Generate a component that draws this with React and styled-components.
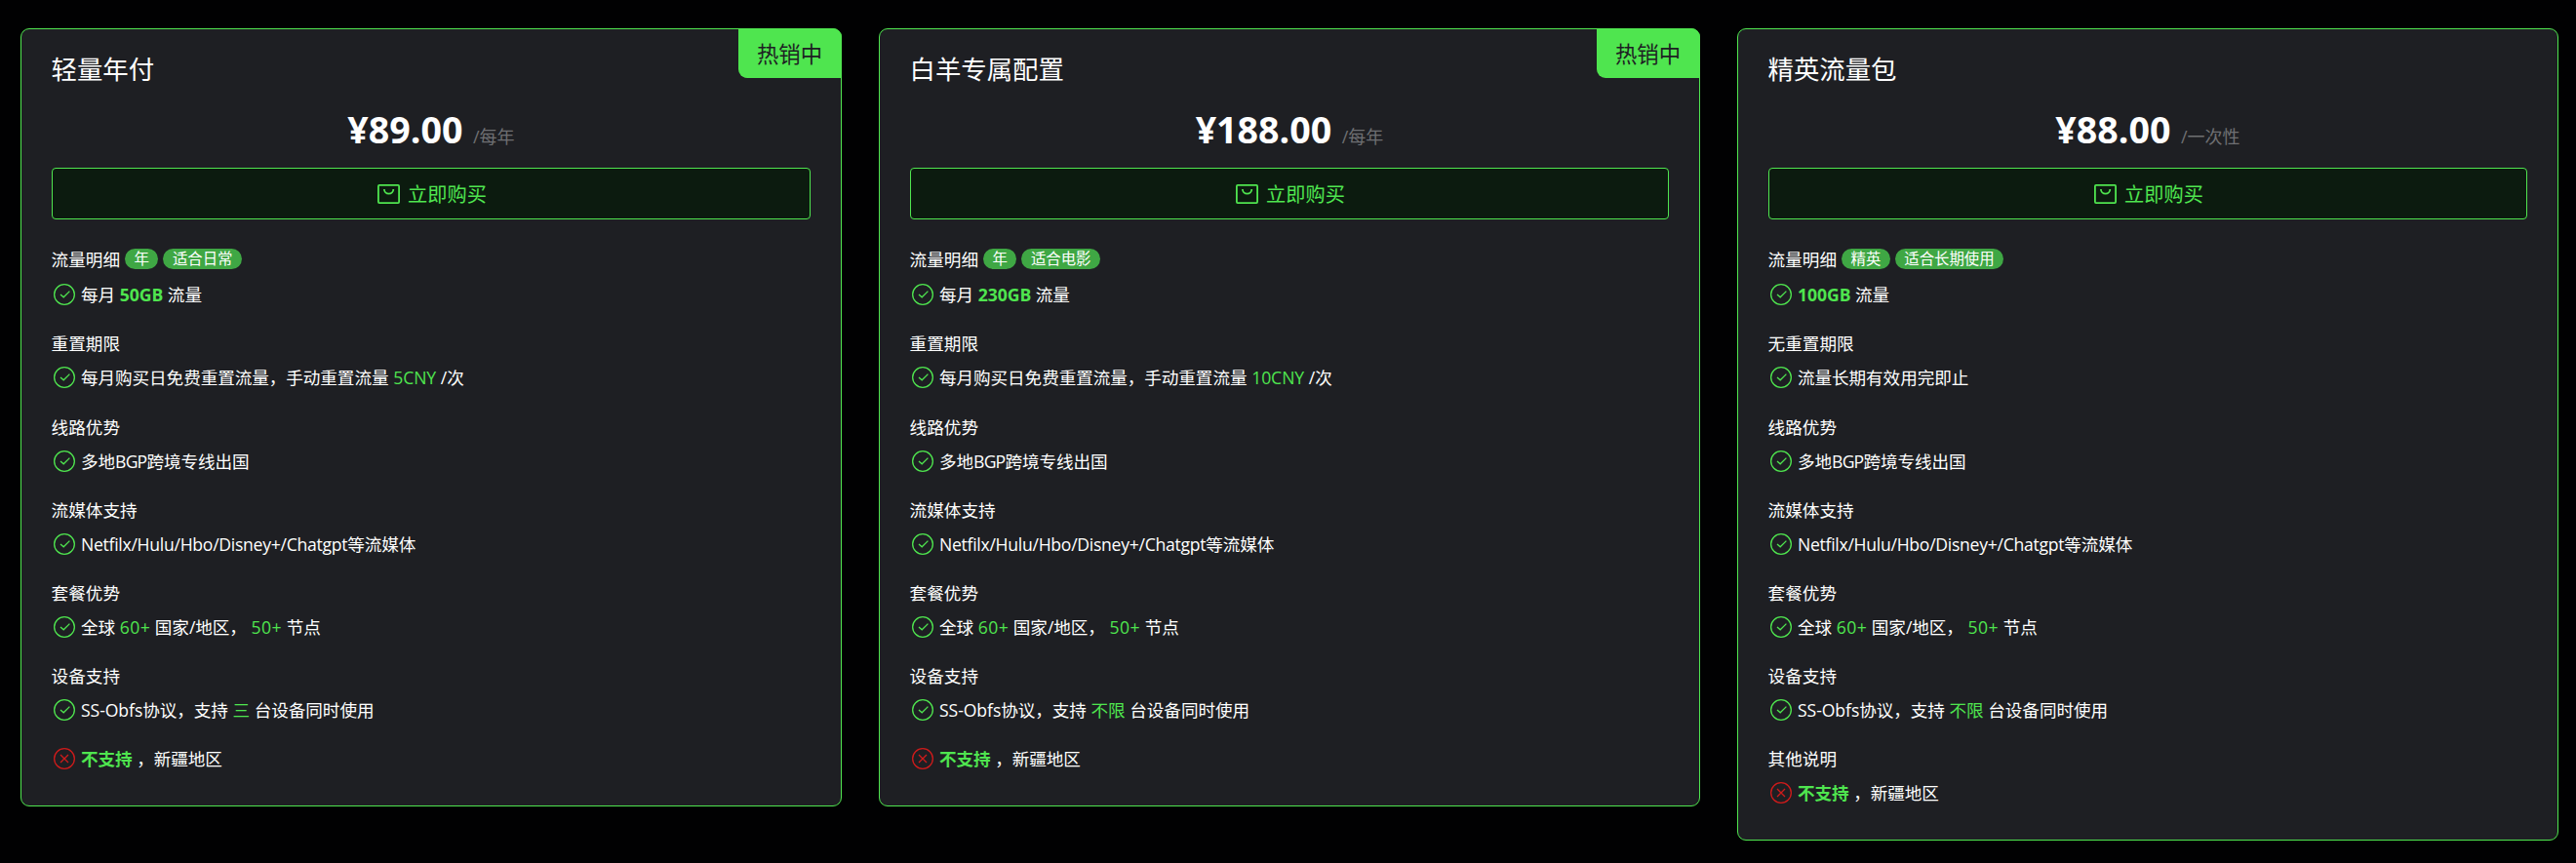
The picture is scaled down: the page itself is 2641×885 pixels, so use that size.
import React from "react";
import styled, { createGlobalStyle } from "styled-components";

const GREEN = "#4fe54f";

const GlobalStyle = createGlobalStyle`
  * { box-sizing: border-box; }
  html, body { margin: 0; background: #010102; }
  body {
    color: #fff;
    font-family: "Open Sans", "Noto Sans CJK SC", sans-serif;
    font-size: 17.6px;
    -webkit-font-smoothing: antialiased;
  }
`;

const Page = styled.main`
  display: flex;
  align-items: flex-start;
  gap: 38px;
  height: 885px;
  padding: 29px 18px 0 21px;
  overflow: hidden;
`;

const Card = styled.article`
  position: relative;
  flex: none;
  width: 842px;
  padding: 23px 31px 30.6px;
  background: #1e1f23;
  border: 1px solid ${GREEN};
  border-radius: 9px;
`;

const HotBadge = styled.span`
  position: absolute;
  top: -1px;
  right: -1px;
  width: 106px;
  height: 51px;
  padding-right: 1px;
  line-height: 53px;
  text-align: center;
  font-size: 22.4px;
  color: #1e1f23;
  background: ${GREEN};
  border-radius: 0 9px 0 9px;
`;

const Title = styled.h2`
  margin: 0 0 0 -0.5px;
  height: 37px;
  line-height: 37px;
  font-size: 26.4px;
  font-weight: 400;
`;

const PriceLine = styled.div`
  display: flex;
  justify-content: center;
  align-items: baseline;
  height: 60px;
  margin-top: 13px;
  line-height: 60px;
`;

const Price = styled.strong`
  font-size: 37.6px;
  font-weight: 700;
`;

const Period = styled.span`
  margin-left: 10.5px;
  color: #6e6f72;
  font-size: 18px;
`;

const BuyButton = styled.button`
  display: flex;
  align-items: center;
  justify-content: center;
  gap: 8px;
  width: 100%;
  height: 53px;
  margin: 9px 0 22px;
  padding: 0 0 0 2px;
  font: inherit;
  font-size: 20.2px;
  color: ${GREEN};
  background: #0c1b0f;
  border: 1px solid ${GREEN};
  border-radius: 4px;
`;

const Section = styled.section`
  margin-bottom: ${(p) => (p.$first ? 15.4 : 15.2)}px;
`;

const Heading = styled.h3`
  display: flex;
  align-items: center;
  gap: 5px;
  height: ${(p) => (p.$first ? 37 : 35)}px;
  margin: 0 0 0 -0.4px;
  font-size: 17.6px;
  font-weight: 400;
`;

const Tag = styled.span`
  height: 21px;
  padding: 0 9.5px;
  line-height: 21px;
  font-size: 15.4px;
  background: #3fa744;
  border-radius: 11px;
`;

const Feature = styled.p`
  display: flex;
  align-items: center;
  height: 35px;
  margin: 0;
  padding-left: 2px;
  gap: 6px;
  white-space: pre;
`;

const FeatureText = styled.span`
  letter-spacing: -0.07px;
  word-spacing: 0.2px;
`;

const Spaced = styled.span`
  letter-spacing: ${(p) => p.$spacing}px;
`;

const Accent = styled.span`
  color: ${GREEN};
  font-weight: ${(p) => (p.$bold ? 700 : 400)};
`;

const Icon = styled.svg`
  flex: none;
  display: block;
  fill: none;
`;

const StatusIcon = styled(Icon)`
  margin-top: 1px;
`;

const BagIcon = () => (
  <Icon width="23" height="20" viewBox="0 0 23 20" stroke={GREEN} strokeWidth="1.8">
    <rect x="0.9" y="0.9" width="21.2" height="18.2" rx="1" />
    <path d="M6.9 5a4.7 4.7 0 0 0 9.4 0" />
  </Icon>
);

const CheckIcon = () => (
  <StatusIcon width="22" height="22" viewBox="0 0 22 22" stroke={GREEN} strokeWidth="1.3">
    <circle cx="11" cy="11" r="10.35" />
    <path d="M7 10.9l3.2 2.9 6.2-6.2" />
  </StatusIcon>
);

const CrossIcon = () => (
  <Icon width="22" height="22" viewBox="0 0 22 22" stroke="#cf1b1b" strokeWidth="1.3">
    <circle cx="11" cy="11" r="10.35" />
    <path d="M7 7l8 8M15 7l-8 8" />
  </Icon>
);

const Row = ({ no, children }) => (
  <Feature>
    {no ? <CrossIcon /> : <CheckIcon />}
    <FeatureText>{children}</FeatureText>
  </Feature>
);

const plans = [
  {
    name: "轻量年付", hot: true, price: "¥89.00", period: "/每年",
    tags: ["年", "适合日常"], prefix: "每月 ", traffic: "50GB",
    reset: "5CNY", devices: "三",
  },
  {
    name: "白羊专属配置", hot: true, price: "¥188.00", period: "/每年",
    tags: ["年", "适合电影"], prefix: "每月 ", traffic: "230GB",
    reset: "10CNY", devices: "不限",
  },
  {
    name: "精英流量包", price: "¥88.00", period: "/一次性",
    tags: ["精英", "适合长期使用"], prefix: "", traffic: "100GB",
    devices: "不限", note: "其他说明",
  },
];

const PlanCard = ({ plan }) => (
  <Card>
    {plan.hot && <HotBadge>热销中</HotBadge>}
    <Title>{plan.name}</Title>
    <PriceLine>
      <Price>{plan.price}</Price>
      <Period>{plan.period}</Period>
    </PriceLine>
    <BuyButton><BagIcon />立即购买</BuyButton>
    <Section $first>
      <Heading $first>
        流量明细
        {plan.tags.map((t) => <Tag key={t}>{t}</Tag>)}
      </Heading>
      <Row>{plan.prefix}<Accent $bold>{plan.traffic}</Accent> 流量</Row>
    </Section>
    <Section>
      <Heading>{plan.reset ? "重置期限" : "无重置期限"}</Heading>
      {plan.reset
        ? <Row>每月购买日免费重置流量，手动重置流量 <Accent>{plan.reset}</Accent> /次</Row>
        : <Row>流量长期有效用完即止</Row>}
    </Section>
    <Section>
      <Heading>线路优势</Heading>
      <Row>多地<Spaced $spacing={-0.8}>BGP</Spaced>跨境专线出国</Row>
    </Section>
    <Section>
      <Heading>流媒体支持</Heading>
      <Row><Spaced $spacing={-0.28}>Netfilx/Hulu/Hbo/Disney+/Chatgpt</Spaced>等流媒体</Row>
    </Section>
    <Section>
      <Heading>套餐优势</Heading>
      <Row>
        全球 <Accent><Spaced $spacing={0.4}>60+</Spaced></Accent> 国家/地区， <Accent><Spaced $spacing={0.4}>50+</Spaced></Accent> 节点
      </Row>
    </Section>
    <Section>
      <Heading>设备支持</Heading>
      <Row>SS-Obfs协议，支持 <Accent>{plan.devices}</Accent> 台设备同时使用</Row>
    </Section>
    {plan.note && <Heading>{plan.note}</Heading>}
    <Row no><Accent $bold>不支持</Accent> ，新疆地区</Row>
  </Card>
);

export default function App() {
  return (
    <>
      <GlobalStyle />
      <Page>
        {plans.map((p) => <PlanCard key={p.name} plan={p} />)}
      </Page>
    </>
  );
}
